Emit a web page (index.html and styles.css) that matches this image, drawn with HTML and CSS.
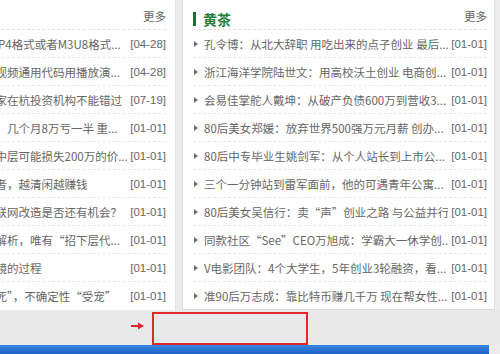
FILE: index.html
```html
<!DOCTYPE html>
<html>
<head>
<meta charset="utf-8">
<link rel="stylesheet" href="styles.css">
</head>
<body>
<div class="page">
  <div class="columns">
    <div class="panel panel-left">
      <div class="panel-head">
        <h3 class="panel-title">红茶</h3>
        <a class="more">更多</a>
      </div>
      <ul class="news">
        <li><span class="t">网页播放器如何播放 P4格式或者M3U8格式...</span><span class="d">[04-28]</span></li>
        <li><span class="t">网页中如何插入一段视频通用代码用播放演...</span><span class="d">[04-28]</span></li>
        <li><span class="t">盘点那些浙江投资专家在杭投资机构不能错过</span><span class="d">[07-19]</span></li>
        <li><span class="t">大学生创业失败故事：几个月8万亏一半 重...</span><span class="d">[01-01]</span></li>
        <li><span class="t">创业公司招错一个人中层可能损失200万的价...</span><span class="d">[01-01]</span></li>
        <li><span class="t">做一个聪明创业管理者，越清闲越赚钱</span><span class="d">[01-01]</span></li>
        <li><span class="t">传统行业现在进行互联网改造是否还有机会？</span><span class="d">[01-01]</span></li>
        <li><span class="t">初创公司的组织架构解析，唯有“招下层代...</span><span class="d">[01-01]</span></li>
        <li><span class="t">一个创业者从零到一镜的过程</span><span class="d">[01-01]</span></li>
        <li><span class="t">创业公司确定性正在死”，不确定性“受宠”</span><span class="d">[01-01]</span></li>
      </ul>
    </div>
    <div class="panel panel-right">
      <div class="panel-head">
        <h3 class="panel-title">黄茶</h3>
        <a class="more">更多</a>
      </div>
      <ul class="news">
        <li><span class="t">孔令博：从北大辞职 用吃出来的点子创业 最后...</span><span class="d">[01-01]</span></li>
        <li><span class="t">浙江海洋学院陆世文：用高校沃土创业 电商创...</span><span class="d">[01-01]</span></li>
        <li><span class="t">会易佳掌舵人戴坤：从破产负债600万到营收3...</span><span class="d">[01-01]</span></li>
        <li><span class="t">80后美女郑媛：放弃世界500强万元月薪 创办...</span><span class="d">[01-01]</span></li>
        <li><span class="t">80后中专毕业生姚剑军：从个人站长到上市公...</span><span class="d">[01-01]</span></li>
        <li><span class="t">三个一分钟站到雷军面前，他的可遇青年公寓...</span><span class="d">[01-01]</span></li>
        <li><span class="t">80后美女吴信行：卖“声”创业之路 与公益并行</span><span class="d">[01-01]</span></li>
        <li><span class="t">同款社区“See”CEO万旭成：学霸大一休学创...</span><span class="d">[01-01]</span></li>
        <li><span class="t">V电影团队：4个大学生，5年创业3轮融资，看...</span><span class="d">[01-01]</span></li>
        <li><span class="t">准90后万志成：靠比特币赚几千万 现在帮女性...</span><span class="d">[01-01]</span></li>
      </ul>
    </div>
  </div>
  <div class="band"></div>
  <div class="taskbar"></div>

  <!-- annotation marks -->
  <svg class="mark-arrow" width="14" height="8" viewBox="0 0 14 8">
    <path d="M0 4 H8" stroke="#e3262b" stroke-width="2"/>
    <path d="M7 0.5 L13 4 L7 7.5 Z" fill="#e3262b"/>
  </svg>
  <div class="mark-box"></div>
</div>
</body>
</html>
```

FILE: styles.css
```css
body {
	margin: 0;
	background: #ececec;
	font-family: "Liberation Sans", "Noto Sans CJK SC", sans-serif;
	font-size: 11.5px;
	color: #666;
}

.page {
	position: relative;
	height: 354px;
	overflow: hidden;
}

.columns {
	display: flex;
	gap: 6px;
	height: 310px;
}

.panel {
	flex: none;
	box-sizing: border-box;
	height: 310px;
	background: #fff;
	overflow: hidden;
}

.panel-left {
	width: 306px;
	margin-left: -130px;
	padding: 0 9px 0 11px;
	border-right: 1px solid #e4e4e4;
}

.panel-right {
	width: 313px;
	padding: 0 7px 0 10px;
	border: 1px solid #dcdcdc;
	border-top: 0;
}

.panel-head {
	display: flex;
	justify-content: space-between;
	align-items: flex-start;
	height: 29px;
	border-bottom: 1px dashed #e2e2e2;
}

.panel-title {
	display: flex;
	align-items: center;
	margin: 11px 0 0;
	font-family: "Noto Sans CJK SC", sans-serif;
	font-size: 14px;
	line-height: 16px;
	font-weight: bold;
	color: #23803b;
}

.panel-title::before {
	content: "";
	width: 3px;
	height: 14px;
	margin-right: 7px;
	background: #137333;
}

.more {
	margin-top: 9px;
	line-height: 14px;
	font-family: "Noto Sans CJK SC", sans-serif;
	color: #666;
}

.news {
	list-style: none;
	margin: 0;
	padding: 0;
}

.news li {
	display: flex;
	align-items: center;
	height: 27px;
	border-bottom: 1px dashed #e8e8e8;
}

.news li::before {
	content: "";
	flex: none;
	margin: 0 6px 0 1px;
	border-left: 4px solid #707070;
	border-top: 3px solid transparent;
	border-bottom: 3px solid transparent;
}

.news li:last-child {
	border-bottom: 0;
}

.t {
	flex: 1;
	min-width: 0;
	overflow: hidden;
	white-space: nowrap;
	font-family: "Noto Sans CJK SC", sans-serif;
}

.d {
	flex: none;
	margin-left: 3px;
}

.band {
	height: 35px;
	background: #e9e9e9;
}

.taskbar {
	width: 489px;
	height: 9px;
	background: linear-gradient(#3b87e0, #1c62c6);
}

.mark-arrow {
	position: absolute;
	left: 131px;
	top: 322px;
}

.mark-box {
	position: absolute;
	left: 152px;
	top: 312px;
	width: 156px;
	height: 33px;
	box-sizing: border-box;
	border: 2px solid #e3262b;
}
```
